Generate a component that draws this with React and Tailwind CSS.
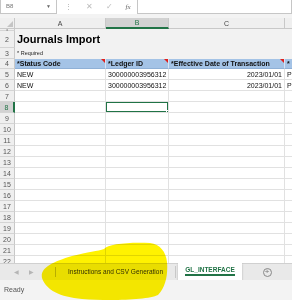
import React from 'react';

// --- Sheet data ---
const ROWS = [
  { n: 1, h: 'h-[2px]', fill: 'bg-[#f2f2f2]', cells: [] },
  { n: 2, h: 'h-[17px]', fill: 'bg-[#f2f2f2]', title: 'Journals Import' },
  { n: 3, h: 'h-[11px]', fill: 'bg-[#f2f2f2]', note: '* Required' },
  { n: 4, h: 'h-[10px]', head: true, cells: ['*Status Code', '*Ledger ID', '*Effective Date of Transaction', '*'] },
  { n: 5, h: 'h-[11px]', cells: ['NEW', '300000003956312', '2023/01/01', 'Pa'] },
  { n: 6, h: 'h-[11px]', cells: ['NEW', '300000003956312', '2023/01/01', 'Pa'] },
];
for (let i = 7; i <= 22; i++) ROWS.push({ n: i, h: 'h-[11px]', cells: [] });

const COLS = ['w-[91px]', 'w-[63px]', 'w-[116px]', 'w-[20px]'];

const Flag = () => (
  <span className="absolute top-0 right-0 w-0 h-0 border-t-[4px] border-l-[4px] border-t-[#e0201b] border-l-transparent" />
);

const RowHeader = ({ n, h, active }) => (
  <div className={`${h} w-[15px] shrink-0 flex items-center justify-center text-[7px] leading-none border-b border-[#d4d4d4] ${active ? 'bg-[#d2d2d2] text-[#217346] border-r-2 border-r-[#217346]' : 'bg-[#efefef] text-[#555] border-r border-r-[#c8c8c8]'}`}>
    {n}
  </div>
);

const Row = ({ row }) => {
  const active = row.n === 8;
  if (row.fill) {
    return (
      <div className="flex">
        <RowHeader n={row.n} h={row.h} />
        <div className={`${row.h} flex-1 ${row.fill} flex items-center pl-[2px] overflow-hidden`}>
          {row.title && <span className="text-[11px] font-bold text-black leading-none">{row.title}</span>}
          {row.note && <span className="text-[5.5px] text-[#222] leading-none">{row.note}</span>}
        </div>
      </div>
    );
  }
  return (
    <div className="flex">
      <RowHeader n={row.n} h={row.h} active={active} />
      {COLS.map((w, i) => {
        const txt = row.cells[i];
        const right = i === 2 && !row.head;
        return (
          <div
            key={i}
            className={`${row.h} ${w} shrink-0 relative flex items-center overflow-hidden whitespace-nowrap text-[7px] leading-none px-[2px] ${
              row.head ? 'bg-[#a4c3e6] font-bold text-[#111] border-r border-r-[#d6e3f3] border-b border-b-[#8fb0d6]' : 'bg-white text-[#111] border-r border-b border-[#e1e1e1]'
            } ${right ? 'justify-end' : ''}`}
          >
            {txt}
            {row.head && i < 3 && <Flag />}
            {active && i === 1 && (
              <>
                <span className="absolute -top-[1px] -left-[1px] -right-[1px] -bottom-[1px] border-2 border-[#217346]" />
                <span className="absolute -bottom-[2px] -right-[2px] w-[4px] h-[4px] bg-[#217346] border border-white" />
              </>
            )}
          </div>
        );
      })}
    </div>
  );
};

export default function App() {
  return (
    <div className="relative w-[292px] h-[300px] overflow-hidden bg-white flex flex-col" style={{ fontFamily: '"Liberation Sans", Arial, sans-serif' }}>
      {/* formula bar */}
      <div className="h-[14px] flex items-stretch bg-white shrink-0">
        <div className="w-[57px] flex items-center justify-between px-[5px] border border-t-0 border-[#c6c6c6]">
          <span className="text-[6px] text-[#777]">B8</span>
          <span className="text-[5px] text-[#666]">▼</span>
        </div>
        <div className="w-[22px] flex items-center justify-center text-[7px] text-[#aaa]">⋮</div>
        <div className="w-[20px] flex items-center justify-center text-[8px] text-[#bbb]">✕</div>
        <div className="w-[20px] flex items-center justify-center text-[8px] text-[#bbb]">✓</div>
        <div className="w-[18px] flex items-center justify-center text-[7px] italic text-[#666]" style={{ fontFamily: '"Liberation Serif", serif' }}>fx</div>
        <div className="flex-1 border border-t-0 border-[#c6c6c6]" />
      </div>
      <div className="h-[4px] bg-[#f3f3f3] shrink-0" />

      {/* column headers */}
      <div className="flex h-[11px] shrink-0 text-[7px] leading-none text-[#444]">
        <div className="w-[15px] shrink-0 relative bg-[#efefef] border-r border-b border-[#c8c8c8]">
          <span className="absolute bottom-[1px] right-[1px] w-0 h-0 border-b-[6px] border-l-[6px] border-b-[#c4c4c4] border-l-transparent" />
        </div>
        <div className="w-[91px] shrink-0 bg-[#efefef] flex items-center justify-center border-r border-b border-[#c8c8c8]">A</div>
        <div className="w-[63px] shrink-0 bg-[#d2d2d2] text-[#217346] flex items-center justify-center border-r border-[#c8c8c8] border-b-2 border-b-[#217346]">B</div>
        <div className="w-[116px] shrink-0 bg-[#efefef] flex items-center justify-center border-r border-b border-[#c8c8c8]">C</div>
        <div className="w-[20px] shrink-0 bg-[#efefef] border-b border-[#c8c8c8]" />
      </div>

      {/* grid */}
      <div className="flex-1 overflow-hidden">
        {ROWS.map(r => <Row key={r.n} row={r} />)}
      </div>

      {/* sheet tabs */}
      <div className="h-[17px] shrink-0 bg-[#e9e9e9] border-t border-[#d0d0d0] flex items-stretch leading-none">
        <div className="w-[55px] flex items-center gap-[10px] pl-[14px] text-[6px] text-[#b5b5b5]">
          <span>◀</span>
          <span>▶</span>
        </div>
        <div className="w-px my-[3px] bg-[#b8b8b8]" />
        <div className="w-[120px] flex items-center justify-center text-[6.5px] text-[#333] border-r border-[#c8c8c8] my-[2px]">Instructions and CSV Generation</div>
        <div className="w-[64px] ml-[2px] -mt-px bg-white flex flex-col items-center justify-center shadow-[0_1px_2px_rgba(0,0,0,0.25)]">
          <span className="text-[6.5px] font-bold text-[#217346] border-b-2 border-[#217346] pb-[1px]">GL_INTERFACE</span>
        </div>
        <div className="flex-1 flex items-center justify-center">
          <span className="w-[9px] h-[9px] rounded-full border border-[#888] flex items-center justify-center text-[8px] text-[#777] leading-none">+</span>
        </div>
      </div>

      {/* status bar */}
      <div className="h-[20px] shrink-0 bg-[#f3f3f3] flex items-center pl-[4px] text-[7px] text-[#555]">Ready</div>

      {/* highlighter annotation */}
      <svg className="absolute left-0 top-0 pointer-events-none mix-blend-multiply" width="292" height="300" viewBox="0 0 292 300">
        <path
          d="M104 249 C108 244 128 242 150 243 C160 244 166 252 167 262 C168 274 166 287 158 295 C148 300 110 301 82 299 C60 297 46 290 42 278 C40 268 52 262 72 256 C88 252 98 251 104 249 Z"
          fill="#fff200"
        />
      </svg>
    </div>
  );
}
